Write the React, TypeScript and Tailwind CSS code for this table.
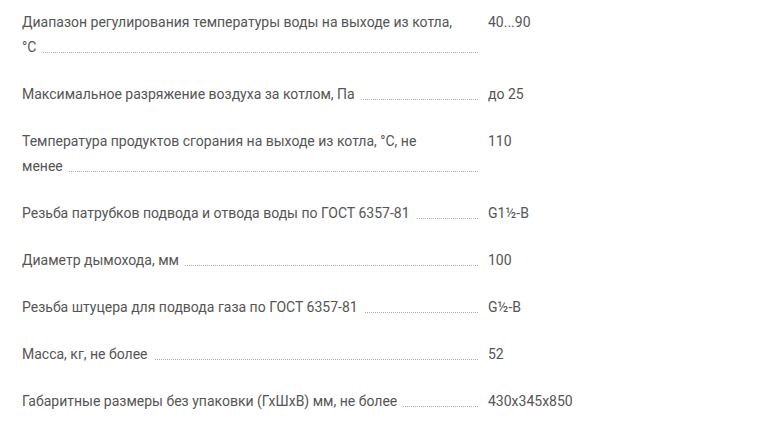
import React from "react";

const rows: [string, string][] = [
  ["Диапазон регулирования температуры воды на выходе из котла, °С", "40...90"],
  ["Максимальное разряжение воздуха за котлом, Па", "до 25"],
  ["Температура продуктов сгорания на выходе из котла, °С, не менее", "110"],
  ["Резьба патрубков подвода и отвода воды по ГОСТ 6357-81", "G1½-B"],
  ["Диаметр дымохода, мм", "100"],
  ["Резьба штуцера для подвода газа по ГОСТ 6357-81", "G½-B"],
  ["Масса, кг, не более", "52"],
  ["Габаритные размеры без упаковки (ГхШхВ) мм, не более", "430x345x850"],
];

export default function App() {
  return (
    <div
      className="w-[760px] h-[431px] bg-white text-[14px] leading-[25px] text-[#555555] pt-[10px] pl-[22px]"
      style={{ fontFamily: "Roboto, 'Noto Sans', sans-serif" }}
    >
      <dl className="flex flex-col gap-[22px]">
        {rows.map(([k, v]) => (
          <div key={k} className="flex items-end">
            <dt className="relative w-[456px] shrink-0 pr-[21px]">
              <span className="absolute left-0 right-0 bottom-[7px] border-b border-dotted border-[#aaaaaa]" />
              <span className="relative bg-white pr-[6px]">{k}</span>
            </dt>
            <dd className="ml-[10px] self-start">{v}</dd>
          </div>
        ))}
      </dl>
    </div>
  );
}
